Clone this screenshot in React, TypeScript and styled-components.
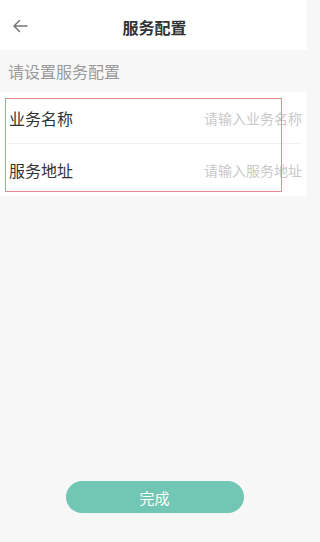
import React from 'react';
import styled, { createGlobalStyle } from 'styled-components';

const GlobalStyle = createGlobalStyle`
  html, body {
    margin: 0;
    padding: 0;
    background: #f7f7f7;
  }
  body {
    font-family: "Noto Sans CJK SC", "Noto Sans", sans-serif;
  }
  * {
    box-sizing: border-box;
  }
`;

const Page = styled.div`
  display: flex;
  flex-direction: column;
  width: 307px;
  height: 542px;
  background: #f7f7f7;
`;

const Header = styled.header`
  position: relative;
  display: flex;
  align-items: center;
  justify-content: center;
  height: 50px;
  background: #fff;
`;

const BackButton = styled.button`
  position: absolute;
  left: 10px;
  top: 16px;
  width: 20px;
  height: 20px;
  padding: 0;
  border: none;
  background: none;
  display: flex;
  align-items: center;
  justify-content: center;
`;

const Title = styled.h1`
  margin: 0;
  font-size: 16px;
  font-weight: 700;
  color: #333;
  padding-left: 2px;
  padding-top: 4px;
`;

const SectionHint = styled.div`
  height: 42px;
  display: flex;
  align-items: center;
  padding-left: 8px;
  font-size: 16px;
  color: #9a9a9a;
`;

const Form = styled.div`
  position: relative;
  background: #fff;
  padding: 0 5px 0 8px;
`;

const Row = styled.div<{ $divider?: boolean }>`
  display: flex;
  align-items: center;
  justify-content: space-between;
  height: 52px;
  border-bottom: ${(p) => (p.$divider ? '1px solid #f1f1f1' : 'none')};
`;

const Label = styled.span`
  font-size: 16px;
  color: #333;
  padding-left: 1px;
`;

const Input = styled.input`
  width: 102px;
  border: none;
  outline: none;
  background: transparent;
  text-align: right;
  font-family: inherit;
  font-size: 14px;
  color: #333;
  padding: 0;
  &::placeholder {
    color: #c9c9c9;
  }
`;

const Highlight = styled.div`
  position: absolute;
  left: 5px;
  top: 6px;
  width: 277px;
  height: 94px;
  border: 1.5px solid #e58a8e;
  pointer-events: none;
`;

const Spacer = styled.div`
  flex: 1;
`;

const Footer = styled.div`
  display: flex;
  justify-content: center;
  padding: 0 0 29px 2px;
`;

const DoneButton = styled.button`
  width: 178px;
  height: 32px;
  border: none;
  border-radius: 16px;
  background: #72c7b4;
  color: #fff;
  font-family: inherit;
  font-size: 15px;
`;

const App: React.FC = () => {
  return (
    <>
      <GlobalStyle />
      <Page>
        <Header>
          <BackButton aria-label='back'>
            <svg width='16' height='14' viewBox='0 0 16 14' fill='none'>
              <path
                d='M15 7H2M7.5 1.5L2 7l5.5 5.5'
                stroke='#777'
                strokeWidth='1.5'
                strokeLinecap='round'
                strokeLinejoin='round'
              />
            </svg>
          </BackButton>
          <Title>服务配置</Title>
        </Header>
        <SectionHint>请设置服务配置</SectionHint>
        <Form>
          <Row $divider>
            <Label>业务名称</Label>
            <Input placeholder='请输入业务名称' />
          </Row>
          <Row>
            <Label>服务地址</Label>
            <Input placeholder='请输入服务地址' />
          </Row>
          <Highlight />
        </Form>
        <Spacer />
        <Footer>
          <DoneButton>完成</DoneButton>
        </Footer>
      </Page>
    </>
  );
};

export default App;
